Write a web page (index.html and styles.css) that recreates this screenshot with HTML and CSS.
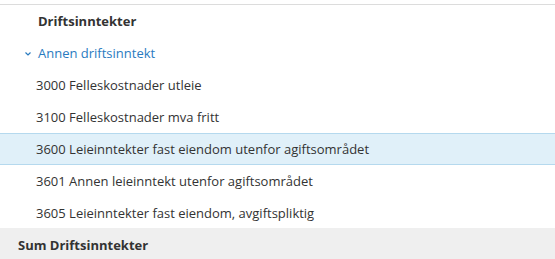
FILE: index.html
```html
<!DOCTYPE html>
<html lang="no">
<head>
<meta charset="utf-8">
<link rel="stylesheet" href="styles.css">
</head>
<body>
<div class="table">
  <div class="row group">Driftsinntekter</div>
  <div class="row sub"><svg class="chev" width="6" height="4" viewBox="0 0 6 4"><path d="M0.5 0.5 L3 3 L5.5 0.5" fill="none" stroke="#2a7bbf" stroke-width="1.2"/></svg>Annen driftsinntekt</div>
  <div class="row acct">3000 Felleskostnader utleie</div>
  <div class="row acct">3100 Felleskostnader mva fritt</div>
  <div class="row acct active">3600 Leieinntekter fast eiendom utenfor agiftsområdet</div>
  <div class="row acct">3601 Annen leieinntekt utenfor agiftsområdet</div>
  <div class="row acct">3605 Leieinntekter fast eiendom, avgiftspliktig</div>
  <div class="row sum">Sum Driftsinntekter</div>
</div>
</body>
</html>
```
FILE: styles.css
```css
html, body { margin: 0; padding: 0; background: #fff; }
body {
  font-family: "Open Sans", "Liberation Sans", sans-serif;
  font-size: 13px;
  color: #333;
  overflow: hidden;
}
.table {
  margin-top: 4px;
  border-top: 1px solid #dcdcdc;
}
.row {
  height: 32px;
  box-sizing: border-box;
  display: flex;
  align-items: center;
  white-space: nowrap;
}
.group { padding-left: 38px; font-weight: 700; }
.sub { padding-left: 25px; color: #2a7bbf; }
.chev { margin-right: 7px; margin-top: 1px; }
.acct { padding-left: 36px; }
.active {
  background: #e0f0f9;
  border-top: 1px solid #b5d9ee;
  border-bottom: 1px solid #b5d9ee;
}
.sum {
  margin-top: -1px;
  padding-left: 18px;
  font-weight: 700;
  background: #efefef;
  height: 33px;
}
```
